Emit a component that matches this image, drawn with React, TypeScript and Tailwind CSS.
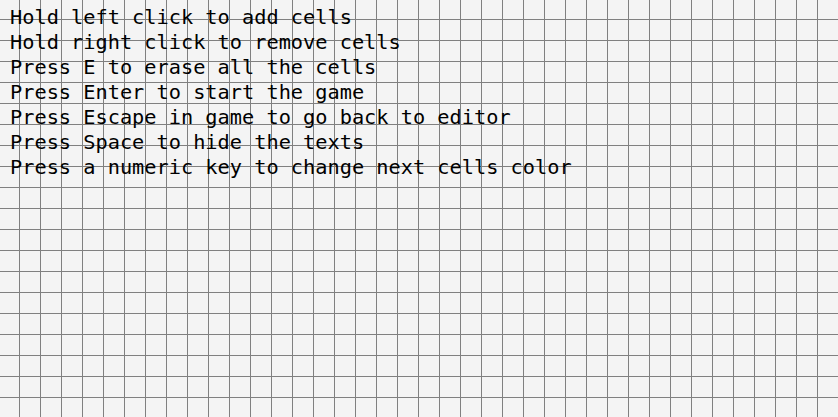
export default function App() {
  const lines = [
    "Hold left click to add cells",
    "Hold right click to remove cells",
    "Press E to erase all the cells",
    "Press Enter to start the game",
    "Press Escape in game to go back to editor",
    "Press Space to hide the texts",
    "Press a numeric key to change next cells color",
  ];
  return (
    <div className="h-[417px] w-[838px] overflow-hidden bg-[#f4f4f4] bg-[linear-gradient(to_right,#808080_1px,transparent_1px),linear-gradient(to_bottom,#808080_1px,transparent_1px)] bg-[size:21px_21px] bg-[position:19px_19px] pl-[10px] pt-[5px]">
      <div className="flex flex-col font-['DejaVu_Sans_Mono',monospace] text-[20.3px] leading-[25px] text-black whitespace-pre">
        {lines.map((l) => (
          <div key={l}>{l}</div>
        ))}
      </div>
    </div>
  );
}
